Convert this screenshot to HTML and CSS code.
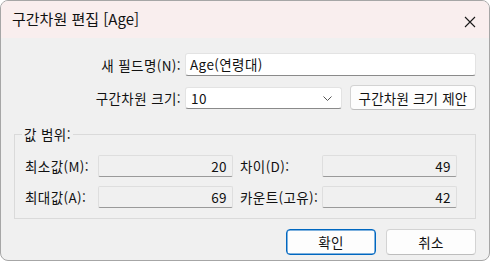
FILE: index.html
```html
<!DOCTYPE html>
<html lang="ko">
<head>
<meta charset="utf-8">
<title>구간차원 편집</title>
<link rel="stylesheet" href="styles.css">
</head>
<body>
<div class="window">
  <div class="titlebar">
    <span class="title">구간차원 편집 [Age]</span>
    <span class="close">
      <svg width="12" height="12" viewBox="0 0 12 12"><path d="M1 1 L11 11 M11 1 L1 11" stroke="#1a1a1a" stroke-width="1.1" fill="none"/></svg>
    </span>
  </div>
  <div class="content">
    <div class="row row-name">
      <label class="label">새 필드명(N):</label>
      <div class="input">Age(연령대)</div>
    </div>
    <div class="row row-size">
      <label class="label">구간차원 크기:</label>
      <div class="combo">
        <span>10</span>
        <svg class="chev" width="9" height="5" viewBox="0 0 9 5"><path d="M0.5 0.5 L4.5 4.5 L8.5 0.5" stroke="#555" stroke-width="1" fill="none"/></svg>
      </div>
      <div class="btn btn-suggest">구간차원 크기 제안</div>
    </div>
    <fieldset class="group">
      <legend class="legend">값 범위:</legend>
      <div class="grid">
        <span class="glabel">최소값(M):</span>
        <div class="ro">20</div>
        <span class="glabel gap">차이(D):</span>
        <div class="ro">49</div>
        <span class="glabel">최대값(A):</span>
        <div class="ro">69</div>
        <span class="glabel gap">카운트(고유):</span>
        <div class="ro">42</div>
      </div>
    </fieldset>
    <div class="actions">
      <div class="btn btn-default">확인</div>
      <div class="btn">취소</div>
    </div>
  </div>
</div>
</body>
</html>
```
FILE: styles.css
```css
* { box-sizing: border-box; }
html, body {
  margin: 0;
  padding: 0;
  background: #ffffff;
}
body {
  font-family: "Noto Sans CJK KR", "Noto Sans", sans-serif;
  font-size: 13.5px;
  letter-spacing: 0.4px;
  color: #111;
}
.window {
  width: 490px;
  height: 261px;
  border: 1px solid #a6a6a6;
  border-radius: 8px;
  overflow: hidden;
  background: #f0f0f0;
  display: flex;
  flex-direction: column;
}
.titlebar {
  height: 37px;
  flex: none;
  background: #f9eeee;
  display: flex;
  align-items: center;
  justify-content: space-between;
  padding: 0 13px 0 11px;
}
.title {
  font-size: 15px;
  letter-spacing: 0;
  line-height: 20px;
  padding-bottom: 1px;
}
.close {
  display: flex;
  width: 12px;
  height: 12px;
  margin-top: 4px;
}
.content {
  padding: 15px 13px 0 13px;
  display: flex;
  flex-direction: column;
}
.row {
  display: flex;
  align-items: center;
}
.label {
  width: 167px;
  flex: none;
  text-align: right;
  line-height: 18px;
  margin-right: 4px;
}
.input {
  flex: 1;
  height: 23px;
  background: #fff;
  border: 1px solid #e3e3e3;
  border-bottom-color: #8a8a8a;
  border-radius: 3px;
  padding: 0 4px;
  line-height: 21px;
}
.row-size {
  margin-top: 9px;
}
.combo {
  width: 157px;
  height: 22px;
  background: #fff;
  border: 1px solid #e3e3e3;
  border-bottom-color: #8a8a8a;
  border-radius: 3px;
  padding: 0 9px 0 5px;
  display: flex;
  align-items: center;
  justify-content: space-between;
  line-height: 20px;
}
.chev { margin-top: 1px; }
.btn {
  display: flex;
  align-items: center;
  justify-content: center;
  background: #fdfdfd;
  border: 1px solid #d3d3d3;
  border-bottom-color: #bdbdbd;
  border-radius: 4px;
  line-height: 18px;
}
.btn-suggest {
  margin-left: 8px;
  width: 126px;
  height: 25px;
  letter-spacing: 0.2px;
}
.group {
  margin: 16px 0 0 0;
  border: 1px solid #dadada;
  padding: 13px 11px 10px 10px;
  min-width: 0;
}
.legend {
  padding: 0 2px;
  margin-left: -3px;
  line-height: 16px;
}
.grid {
  display: grid;
  grid-template-columns: 73px 135px 89px 135px;
  row-gap: 9px;
  align-items: center;
}
.glabel {
  line-height: 18px;
  white-space: nowrap;
}
.glabel.gap {
  padding-left: 7px;
}
.ro {
  height: 22px;
  background: #f0f0f0;
  border: 1px solid #dedede;
  border-bottom-color: #9a9a9a;
  border-radius: 2px;
  text-align: right;
  padding-right: 5px;
  line-height: 20px;
}
.actions {
  display: flex;
  justify-content: flex-end;
  gap: 10px;
  margin-top: 10px;
}
.actions .btn {
  width: 90px;
  height: 26px;
}
.btn-default {
  border: 1px solid #0067c0;
  box-shadow: inset 0 0 0 0.5px #0067c0;
}
```
